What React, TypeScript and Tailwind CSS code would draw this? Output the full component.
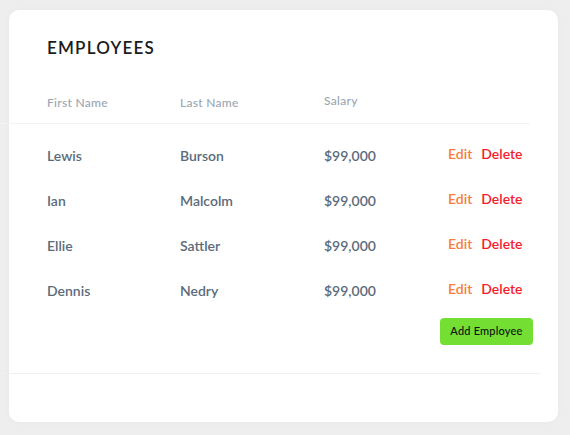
import React from "react";

const rows = [
  { first: "Lewis", last: "Burson", salary: "$99,000" },
  { first: "Ian", last: "Malcolm", salary: "$99,000" },
  { first: "Ellie", last: "Sattler", salary: "$99,000" },
  { first: "Dennis", last: "Nedry", salary: "$99,000" },
];

export default function App() {
  return (
    <div
      className="w-[570px] h-[435px] bg-[#eeeeee] overflow-hidden pt-[10px] pl-[9px]"
      style={{ fontFamily: "Lato, 'Noto Sans', sans-serif" }}
    >
      <div className="w-[549px] h-[412px] bg-white rounded-[10px] shadow-[0_0_6px_rgba(0,0,0,0.03)] flex flex-col">
        <div className="pl-[38px] pt-[26px] text-[17px] leading-[24px] font-semibold tracking-[1.2px] text-[#1c1c1c]">
          EMPLOYEES
        </div>
        <div className="flex pl-[38px] mt-[28px] h-[30px] items-center text-[12px] text-[#9ba6b1] font-medium tracking-[0.3px]">
          <div className="w-[133px]">First Name</div>
          <div className="w-[144px]">Last Name</div>
          <div className="w-[124px] -mt-[4px]">Salary</div>
        </div>
        <div className="-ml-[9px] w-[530px] h-px bg-[#f3f3f3] mt-[5px]" />
        <div className="flex flex-col pt-[9px]">
          {rows.map((r) => (
            <div
              key={r.first}
              className="flex pl-[38px] h-[45px] items-center text-[14px] font-semibold text-[#5b6b7b]"
            >
              <div className="w-[133px]">{r.first}</div>
              <div className="w-[144px]">{r.last}</div>
              <div className="w-[124px]">{r.salary}</div>
              <div className="flex gap-[9px] -mt-[4px] font-semibold">
                <span className="text-[#f97c3c]">Edit</span>
                <span className="text-[#f41d2c]">Delete</span>
              </div>
            </div>
          ))}
        </div>
        <div className="flex justify-end pr-[25px] mt-[5px]">
          <button className="w-[93px] h-[27px] rounded-[4px] bg-[#74de33] text-[11px] text-[#111] font-medium tracking-[0.2px]">
            Add Employee
          </button>
        </div>
        <div className="-ml-[9px] w-[540px] h-px bg-[#f0f0f0] mt-[28px]" />
      </div>
    </div>
  );
}
